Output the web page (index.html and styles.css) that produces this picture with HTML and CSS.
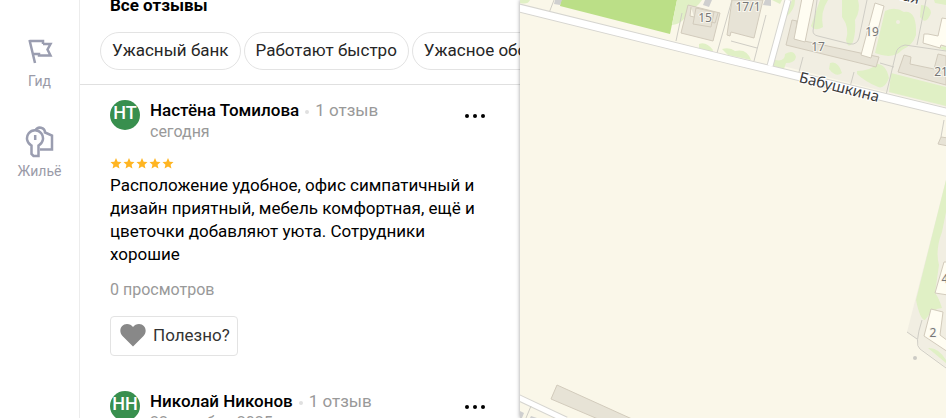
FILE: index.html
```html
<!DOCTYPE html>
<html lang="ru">
<head>
    <meta charset="UTF-8">
    <meta name="viewport" content="width=device-width, initial-scale=1.0">
    <title>Все отзывы</title>
    <link rel="stylesheet" href="styles.css">
</head>
<body>
    <div class="app">
        <nav class="sidebar">
            <a class="nav-item" href="#guide">
                <svg width="26" height="26" viewBox="0 0 26 26">
                    <path d="M2.500 3H16V6M2.500 2L8 25M5.500 16H12V17.500H23.500L20.500 11.500L23.500 6H16"/>
                </svg>
                <span>Гид</span>
            </a>
            <a class="nav-item nav-home" href="#housing">
                <svg width="30" height="35" viewBox="0 0 30 35">
                    <path d="M10.500 7.500A5 5 0 0 1 20 9.500M19 9L27 12.500V26.500H15M10.200 12V17"/>
                    <path d="M13.500 28V22.500A8 8 0 1 0 6.500 22.500V31L8.500 33H13.500V22.500"/>
                </svg>
                <span>Жильё</span>
            </a>
        </nav>

        <main class="panel">
            <header class="panel-head">
                <h1>Все отзывы</h1>
                <div class="chips">
                    <button class="chip">Ужасный банк</button>
                    <button class="chip">Работают быстро</button>
                    <button class="chip">Ужасное обслуживание</button>
                </div>
            </header>

            <article class="review">
                <div class="review-head">
                    <div class="avatar">НТ</div>
                    <div class="author">
                        <div><span class="name">Настёна Томилова</span><span class="dot"></span><span class="count">1 отзыв</span></div>
                        <div class="date">сегодня</div>
                    </div>
                    <button class="more" aria-label="Ещё"><i></i><i></i><i></i></button>
                </div>
                <div class="stars">
                    <svg viewBox="0 0 24 24"><path d="M12 0l3.600 8 8.400.8-6.400 5.700 1.900 8.500-7.500-4.300L4.500 23l1.900-8.500L0 8.800 8.400 8z"/></svg>
                    <svg viewBox="0 0 24 24"><path d="M12 0l3.600 8 8.400.8-6.400 5.700 1.900 8.500-7.500-4.300L4.500 23l1.900-8.500L0 8.800 8.400 8z"/></svg>
                    <svg viewBox="0 0 24 24"><path d="M12 0l3.600 8 8.400.8-6.400 5.700 1.900 8.500-7.500-4.300L4.500 23l1.900-8.500L0 8.800 8.400 8z"/></svg>
                    <svg viewBox="0 0 24 24"><path d="M12 0l3.600 8 8.400.8-6.400 5.700 1.900 8.500-7.500-4.300L4.500 23l1.900-8.500L0 8.800 8.400 8z"/></svg>
                    <svg viewBox="0 0 24 24"><path d="M12 0l3.600 8 8.400.8-6.400 5.700 1.900 8.500-7.500-4.300L4.500 23l1.900-8.500L0 8.800 8.400 8z"/></svg>
                </div>
                <p class="text">Расположение удобное, офис симпатичный и дизайн приятный, мебель комфортная, ещё и цветочки добавляют уюта. Сотрудники хорошие</p>
                <div class="views">0 просмотров</div>
                <button class="useful">
                    <svg width="26" height="24" viewBox="0 0 26 24"><path d="M13 23.500L2.500 13C-2 8 1 1 7 1c2.500 0 4.500 1 6 3 1.500-2 3.500-3 6-3 6 0 9 7 4.500 12z"/></svg>
                    Полезно?
                </button>
            </article>

            <article class="review">
                <div class="review-head">
                    <div class="avatar">НН</div>
                    <div class="author">
                        <div><span class="name">Николай Никонов</span><span class="dot"></span><span class="count">1 отзыв</span></div>
                        <div class="date">22 октября 2025</div>
                    </div>
                    <button class="more" aria-label="Ещё"><i></i><i></i><i></i></button>
                </div>
            </article>
        </main>

        <section class="map">
            <svg viewBox="520 0 426 418" preserveAspectRatio="xMinYMin slice">
                <!-- blocks -->
                <path class="block" d="M790 0H946V107L771 63z"/>
                <path class="block" d="M946 180L907 332L917 339L920 348L946 367z"/>
                <!-- greenery -->
                <path class="park" d="M561 0L560 6L670 34L677 0z"/>
                <path class="green" d="M677 0H702Q697 8 688 11Q684 24 672 25zM520 0H530Q528 5 520 3zM699 44Q706 41 713 50L712 52L699 48zM722 49Q730 47 735 51Q747 48 751 60L728 55zM772 0H782L780 4zM792 0H795Q795 10 786 17zM775 60Q785 62 785 54Q794 49 796 57Q795 63 786 63L784 69L773 66z"/>
                <path class="green" d="M820 0H828Q820 12 823 27Q815 32 811 26zM842 0H858Q861 10 855 20Q856 32 853 42Q848 50 846 40Q850 28 842 17zM885 11Q895 6 904 12Q917 10 916 35Q913 45 902 50Q893 60 875 53zM921 5Q930 5 931 13Q926 26 920 17zM934 0H946V5L935 3zM830 63Q838 60 842 73Q836 78 829 69zM857 71Q870 71 877 64Q886 64 889 78Q884 91 876 86Q866 82 857 74zM891 73L946 87V106L889 92zM939 48L946 45V51z"/>
                <path class="green" d="M946 180L916 300Q920 320 925 320Q933 308 942 308Q939 298 935 293L939 265Q935 250 942 232L946 212zM928 348Q938 347 946 360V363z"/>
                <circle class="block" cx="898" cy="22" r="2"/>
                <!-- paths -->
                <path class="path" d="M554 0L549 13M682 13L676 41M732 0L717 53M731 41L757 48M766 15L754 61M817 0L813 31Q813 35 818 36L850 44Q857 45 859 38L867 0M803 57L799 72M854 72L850 87M926 0L917 45M946 51L905 45Q897 47 896 53L886 95M880 63L894 67"/>
                <path class="path" d="M922 320Q914 345 920 349L946 368M907 332L917 339M944 120L941 137"/>
                <!-- streets -->
                <path class="road-edge" d="M788 0L770 66"/>
                <path class="road-edge main" d="M515 7L730 60L950 113"/>
                <path class="road-edge" d="M515 396L566 420"/>
                <path class="road" d="M788 0L770 66M515 396L566 420"/>
                <path class="road main" d="M515 7L730 60L950 113"/>
                <!-- buildings -->
                <path class="house" d="M688 5L720 13L713 41L681 33zM691 7L690 16L694 17M696 8L714 12L711 27L693 24zM718 13L715 23L711 22M732 0H763L754 38L731 32L730 36L727 35zM792 20L797 21L795 39L879 57L876 67L786 45zM904 55L911 57L910 64L934 69L938 54L946 56V85L898 72zM941 137L948 138V146L938 144zM557 385L632 419H598L551 399z"/>
                <path class="house cream" d="M802 -2H814L805 42L794 39zM875 3L884 6L871 58L861 55zM928 34L938 36L942 18L948 19V47L941 45L940 48L923 43L924 34zM944 262H948V295L935 293zM931 309L943 312L940 335L948 341V352L924 336z"/>
                <path class="shed" d="M555 0H562L560 5L554 4zM705 0H712L709 7L703 5zM765 0H771V6L763 5zM520 411L524 413L522 418H520zM531 416L537 418H530z"/>
                <path class="path" d="M531 406L526 418"/>
                <circle cx="915" cy="358" r="2" fill="#cccbc5"/>
                <!-- labels -->
                <g class="num">
                    <text x="705" y="22">15</text>
                    <text x="748" y="11">17/1</text>
                    <text x="818" y="51">17</text>
                    <text x="872" y="36">19</text>
                    <text x="941" y="76">21</text>
                    <text x="945" y="283">4</text>
                    <text x="933" y="337">2</text>
                </g>
                <text class="street" transform="translate(838 92) rotate(14)">Бабушкина</text>
                <text class="street" transform="translate(898 -1) rotate(14)">Тихая</text>
            </svg>
        </section>
    </div>
</body>
</html>
```

FILE: styles.css
```css
* { box-sizing: border-box; margin: 0; padding: 0; }
body { font-family: Roboto, "Noto Sans", sans-serif; font-size: 17px; line-height: 22px; color: #000000; background: #ffffff; }
button { font: inherit; color: inherit; background: none; border: none; cursor: pointer; }
.app { display: flex; height: 100vh; overflow: hidden; }

.sidebar { flex: 0 0 80px; border-right: 1px solid #ececec; padding-top: 38px; display: flex; flex-direction: column; gap: 33px; }
.nav-item {
    display: flex; flex-direction: column; align-items: center; gap: 8px;
    font-size: 14px; line-height: 18px; color: #9a9ba8; text-decoration: none;
}
.nav-home { gap: 4px; }
.nav-item svg { fill: none; stroke: #9a9db0; stroke-width: 2.5; }

.panel { flex: 0 0 440px; min-width: 0; overflow: hidden; }
.panel-head { margin-top: -6px; padding-bottom: 14px; border-bottom: 1px solid #e0e0e0; }
h1 { font-size: 17px; line-height: 22px; font-weight: 700; padding-left: 30px; }
.chips { display: flex; gap: 3px; margin-top: 16px; padding-left: 20px; overflow: hidden; }
.chip {
    flex: none; height: 38px; padding: 0 11px 2px; border: 1px solid #e3e3e3; border-radius: 19px;
    color: #262626; white-space: nowrap;
}

.review { padding: 15px 30px 20px; }
.review-head { display: flex; }
.avatar {
    width: 30px; height: 30px; border-radius: 50%; background: #388f4e; color: #ffffff;
    font-size: 18px; line-height: 26px; font-weight: 500; text-align: center;
}
.author { flex: 1; margin-top: -1px; padding-left: 10px; }
.name { font-weight: 500; }
.dot { display: inline-block; width: 4px; height: 4px; margin: 0 6px; border-radius: 50%; background: #e0e0e0; vertical-align: middle; }
.count, .views { color: #999999; }
.date { font-size: 16px; line-height: 22px; color: #999999; }
.more { display: flex; gap: 4px; align-items: center; height: 32px; padding: 0 5px; }
.more i { width: 4px; height: 4px; border-radius: 50%; background: #000000; }
.stars { display: flex; gap: 1px; margin-top: 15px; }
.stars svg { width: 12px; height: 11px; fill: #ffb522; }
.text { margin-top: 5px; line-height: 23px; }
.views { margin-top: 13px; font-size: 16px; }
.useful {
    display: flex; align-items: center; gap: 7px; height: 40px; margin-top: 15px; padding: 0 7px 2px 9px;
    border: 1px solid #e3e3e3; border-radius: 4px; color: #333333;
}
.useful svg { fill: #888888; }

.map { flex: 1; min-width: 0; background: #faf7e9; box-shadow: 0 0 4px rgba(0, 0, 0, 0.4); z-index: 1; }
.map svg { display: block; width: 100%; height: 100%; }
.block { fill: #f1eee2; }
.park { fill: #bbdf87; }
.green { fill: #e0f0c5; }
.path { fill: none; stroke: #cfcdc5; stroke-width: 1; }
.road-edge { fill: none; stroke: #d6d5d0; stroke-width: 7; }
.road { fill: none; stroke: #ffffff; stroke-width: 5; }
.road-edge.main { stroke-width: 9; }
.road.main { stroke-width: 7; }
.house { fill: #e7e3d6; stroke: #d2cbbc; stroke-width: 1; }
.house.cream { fill: #fffdf2; }
.shed { fill: #cfcfcf; }
.num text { font-family: "Noto Sans", sans-serif; font-size: 12px; fill: #777777; text-anchor: middle; stroke: #f8f6ee; stroke-width: 2; paint-order: stroke; }
.street { font-family: "Noto Sans", sans-serif; font-size: 15px; fill: #3c3c3c; text-anchor: middle; stroke: #ffffff; stroke-width: 2; paint-order: stroke; }
```
